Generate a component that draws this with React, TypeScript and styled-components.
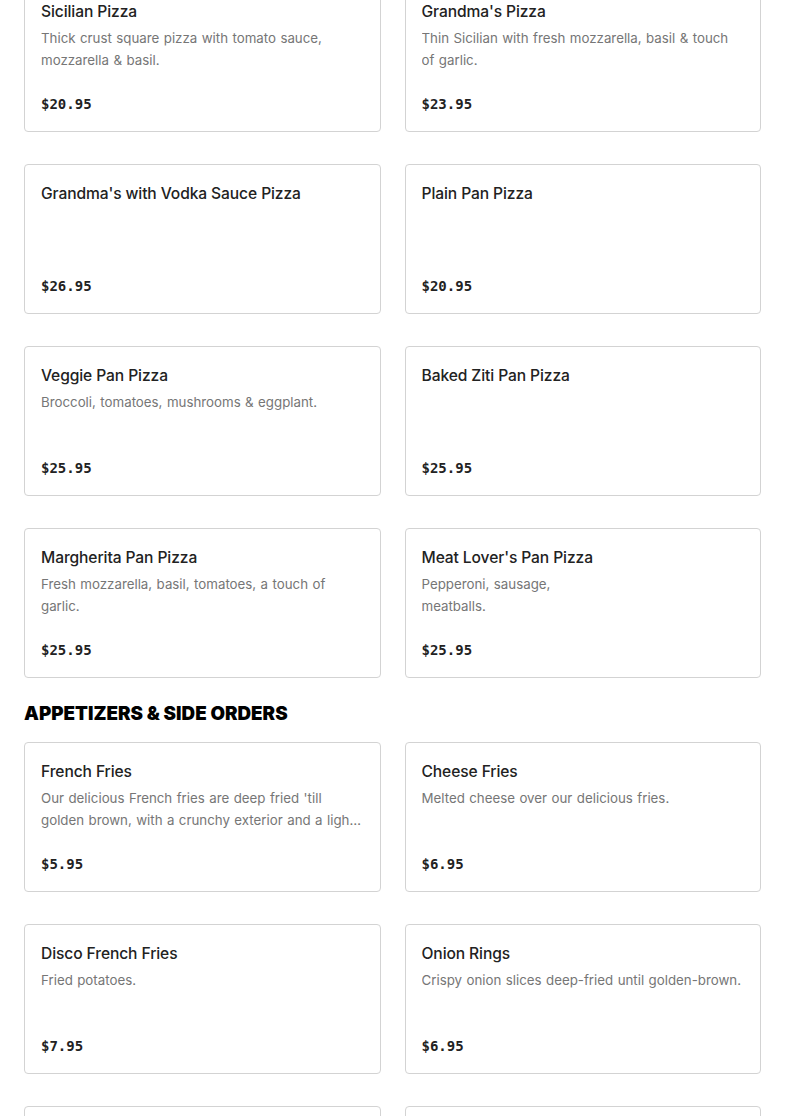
import styled, { createGlobalStyle } from "styled-components";

const GlobalStyle = createGlobalStyle`
  body {
    margin: 0;
    background: #fff;
    font-family: "Inter", "Liberation Sans", sans-serif;
    color: #222;
  }
`;

type Item = { name: string; desc?: string; price: string };

const pizzas: Item[] = [
  { name: "Sicilian Pizza", desc: "Thick crust square pizza with tomato sauce, mozzarella & basil.", price: "$20.95" },
  { name: "Grandma's Pizza", desc: "Thin Sicilian with fresh mozzarella, basil & touch of garlic.", price: "$23.95" },
  { name: "Grandma's with Vodka Sauce Pizza", price: "$26.95" },
  { name: "Plain Pan Pizza", price: "$20.95" },
  { name: "Veggie Pan Pizza", desc: "Broccoli, tomatoes, mushrooms & eggplant.", price: "$25.95" },
  { name: "Baked Ziti Pan Pizza", price: "$25.95" },
  { name: "Margherita Pan Pizza", desc: "Fresh mozzarella, basil, tomatoes, a touch of garlic.", price: "$25.95" },
  { name: "Meat Lover's Pan Pizza", desc: "Pepperoni, sausage,\nmeatballs.", price: "$25.95" },
];

const sides: Item[] = [
  { name: "French Fries", desc: "Our delicious French fries are deep fried 'till golden brown, with a crunchy exterior and a light and fluffy interior.", price: "$5.95" },
  { name: "Cheese Fries", desc: "Melted cheese over our delicious fries.", price: "$6.95" },
  { name: "Disco French Fries", desc: "Fried potatoes.", price: "$7.95" },
  { name: "Onion Rings", desc: "Crispy onion slices deep-fried until golden-brown.", price: "$6.95" },
  { name: "Mozzarella Sticks", price: "$8.95" },
  { name: "Chicken Fingers", price: "$9.95" },
];

const Page = styled.main`
  margin-top: -18px;
  padding: 0 24px 24px;
  display: flex;
  flex-direction: column;
  gap: 24px;
`;

const Section = styled.section`
  display: flex;
  flex-direction: column;
`;

const Heading = styled.h2`
  margin: 0 0 16px;
  font-family: "Inter", "Liberation Sans", sans-serif;
  font-size: 18.8px;
  line-height: 24px;
  font-weight: 900;
  text-transform: uppercase;
  color: #000;
`;

const Grid = styled.div`
  display: grid;
  grid-template-columns: 1fr 1fr;
  column-gap: 24px;
  row-gap: 32px;
`;

const Card = styled.article`
  box-sizing: border-box;
  height: 150px;
  padding: 16px;
  border: 1px solid #d3d3d3;
  border-radius: 4px;
  display: flex;
  flex-direction: column;
`;

const Name = styled.h3`
  margin: 1px 0 3px;
  font-size: 15.6px;
  line-height: 24px;
  font-weight: 500;
  letter-spacing: -0.1px;
  color: #222;
`;

const Desc = styled.p`
  margin: 0;
  font-size: 13.3px;
  line-height: 22px;
  word-spacing: 0.7px;
  color: #767676;
  white-space: pre-line;
  display: -webkit-box;
  -webkit-line-clamp: 2;
  -webkit-box-orient: vertical;
  overflow: hidden;
`;

const Price = styled.div`
  margin-top: auto;
  font-family: "DejaVu Sans Mono", "Liberation Mono", monospace;
  font-size: 14px;
  line-height: 22px;
  font-weight: 700;
  color: #222;
`;

const MenuCard = ({ item }: { item: Item }) => (
  <Card>
    <Name>{item.name}</Name>
    {item.desc ? <Desc>{item.desc}</Desc> : null}
    <Price>{item.price}</Price>
  </Card>
);

export default function App() {
  return (
    <>
      <GlobalStyle />
      <Page>
        <Section>
          <Grid>
            {pizzas.map((p) => (
              <MenuCard key={p.name} item={p} />
            ))}
          </Grid>
        </Section>
        <Section>
          <Heading>Appetizers &amp; Side Orders</Heading>
          <Grid>
            {sides.map((p) => (
              <MenuCard key={p.name} item={p} />
            ))}
          </Grid>
        </Section>
      </Page>
    </>
  );
}
